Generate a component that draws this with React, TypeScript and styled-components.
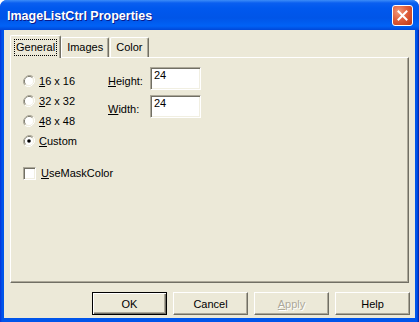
import styled, { createGlobalStyle } from 'styled-components';

const GlobalStyle = createGlobalStyle`
  html, body { margin: 0; padding: 0; background: #ffffff; }
  body { font-family: 'Liberation Sans', Arial, sans-serif; font-size: 11px; color: #000; }
`;

const Window = styled.div`
  width: 419px;
  height: 322px;
  box-sizing: border-box;
  display: flex;
  flex-direction: column;
  border-radius: 7px 7px 0 0;
  background: linear-gradient(90deg, #0831d9 0, #0055ea 2px, #0055ea 417px, #001ea0 100%);
  overflow: hidden;
`;

const TitleBar = styled.div`
  height: 30px;
  flex: none;
  display: flex;
  align-items: center;
  justify-content: space-between;
  padding: 0 6px 0 7px;
  background: linear-gradient(180deg, #3c8cf8 0, #0a5ff0 3px, #0058ee 8px, #0055e8 18px, #0062f6 26px, #0048d8 30px);
`;

const Title = styled.span`
  color: #ffffff;
  font-family: 'Liberation Sans', Arial, sans-serif;
  font-weight: bold;
  font-size: 12.5px;
  text-shadow: 1px 1px 0 #0a1a8a;
  margin-top: 1px;
`;

const CloseButton = styled.div`
  width: 19px;
  height: 19px;
  border: 1px solid #ffffff;
  border-radius: 3px;
  background: radial-gradient(circle at 30% 30%, #f29a7c 0, #e05f3c 45%, #c13512 100%);
  display: flex;
  align-items: center;
  justify-content: center;
  margin-top: 1px;
`;

const Client = styled.div`
  flex: 1;
  margin: 0 4px 4px 4px;
  background: #ece9d8;
  display: flex;
  flex-direction: column;
  padding: 5px 5px 0 6px;
`;

const TabRow = styled.div`
  display: flex;
  align-items: flex-end;
  height: 22px;
  position: relative;
  z-index: 1;
`;

const Tab = styled.div<{ $active?: boolean }>`
  box-sizing: border-box;
  padding: 0 3px;
  margin: ${(p) => (p.$active ? '0 -1px -1px 0' : '0 0 0 1px')};
  height: ${(p) => (p.$active ? 23 : 20)}px;
  display: flex;
  align-items: center;
  background: #ece9d8;
  border-left: 1px solid #ffffff;
  border-top: 1px solid #ffffff;
  border-right: 1px solid #716f64;
  box-shadow: inset -1px 0 0 #aca899;
  border-radius: 2px 2px 0 0;
`;

const TabLabel = styled.span<{ $focus?: boolean }>`
  padding: 1px;
  border: 1px dotted ${(p) => (p.$focus ? '#000' : 'transparent')};
  line-height: 13px;
`;

const Panel = styled.div`
  height: 226px;
  box-sizing: border-box;
  width: 399px;
  border-left: 1px solid #ffffff;
  border-top: 1px solid #ffffff;
  border-right: 1px solid #716f64;
  border-bottom: 1px solid #716f64;
  box-shadow: inset -1px -1px 0 #aca899;
  display: flex;
  flex-direction: column;
  padding: 12px 0 0 12px;
`;

const TopSection = styled.div`
  display: flex;
  align-items: flex-start;
`;

const RadioGroup = styled.div`
  display: flex;
  flex-direction: column;
  width: 85px;
  margin-top: 1px;
`;

const OptionRow = styled.label`
  height: 20px;
  display: flex;
  align-items: center;
  gap: 4px;
`;

const Fields = styled.div`
  display: grid;
  grid-template-columns: 42px 51px;
  row-gap: 5px;
  margin-top: -3px;
`;

const FieldLabel = styled.span`
  display: flex;
  align-items: center;
  padding-top: 5px;
`;

const Edit = styled.div`
  height: 23px;
  box-sizing: border-box;
  background: #ffffff;
  border-top: 1px solid #aca899;
  border-left: 1px solid #aca899;
  border-right: 1px solid #ffffff;
  border-bottom: 1px solid #ffffff;
  box-shadow: inset 1px 1px 0 #716f64, inset -1px -1px 0 #f1efe2;
  padding: 1px 3px;
  line-height: 13px;
`;

const CheckRow = styled(OptionRow)`
  margin-top: 12px;
  gap: 5px;
`;

const Check = styled.span`
  width: 13px;
  height: 13px;
  box-sizing: border-box;
  background: #ffffff;
  border-top: 1px solid #aca899;
  border-left: 1px solid #aca899;
  border-right: 1px solid #ffffff;
  border-bottom: 1px solid #ffffff;
  box-shadow: inset 1px 1px 0 #716f64, inset -1px -1px 0 #f1efe2;
`;

const ButtonRow = styled.div`
  display: flex;
  justify-content: flex-end;
  gap: 6px;
  margin-top: 9px;
  width: 400px;
`;

const Button = styled.div<{ $default?: boolean; $disabled?: boolean }>`
  width: 75px;
  height: 23px;
  box-sizing: border-box;
  display: flex;
  align-items: center;
  justify-content: center;
  background: #ece9d8;
  color: ${(p) => (p.$disabled ? '#aca899' : '#000')};
  text-shadow: ${(p) => (p.$disabled ? '1px 1px 0 #ffffff' : 'none')};
  border: 1px solid;
  border-color: ${(p) => (p.$default ? '#000' : '#ffffff #716f64 #716f64 #ffffff')};
  box-shadow: ${(p) =>
    p.$default
      ? 'inset 1px 1px 0 #ffffff, inset -1px -1px 0 #716f64, inset -2px -2px 0 #aca899'
      : 'inset -1px -1px 0 #aca899'};
`;

function Radio({ checked }: { checked?: boolean }) {
  return (
    <svg width="12" height="12" viewBox="0 0 12 12">
      <path d="M10.2 1.8 A6 6 0 0 0 1.8 10.2" fill="none" stroke="#aca899" strokeWidth="1" />
      <path d="M9.5 2.5 A5 5 0 0 0 2.5 9.5" fill="none" stroke="#716f64" strokeWidth="1" />
      <path d="M1.8 10.2 A6 6 0 0 0 10.2 1.8" fill="none" stroke="#ffffff" strokeWidth="1" />
      <path d="M2.5 9.5 A5 5 0 0 0 9.5 2.5" fill="none" stroke="#f1efe2" strokeWidth="1" />
      <circle cx="6" cy="6" r="4" fill="#ffffff" />
      {checked && <circle cx="6" cy="6" r="1.8" fill="#000000" />}
    </svg>
  );
}

export default function App() {
  return (
    <>
      <GlobalStyle />
      <Window>
        <TitleBar>
          <Title>ImageListCtrl Properties</Title>
          <CloseButton>
            <svg width="11" height="11" viewBox="0 0 11 11">
              <path d="M1.5 1.5 L9.5 9.5 M9.5 1.5 L1.5 9.5" stroke="#ffffff" strokeWidth="2" strokeLinecap="square" />
            </svg>
          </CloseButton>
        </TitleBar>
        <Client>
          <TabRow>
            <Tab $active>
              <TabLabel $focus>General</TabLabel>
            </Tab>
            <Tab>
              <TabLabel>Images</TabLabel>
            </Tab>
            <Tab>
              <TabLabel>Color</TabLabel>
            </Tab>
          </TabRow>
          <Panel>
            <TopSection>
              <RadioGroup>
                <OptionRow><Radio /><span><u>1</u>6 x 16</span></OptionRow>
                <OptionRow><Radio /><span><u>3</u>2 x 32</span></OptionRow>
                <OptionRow><Radio /><span><u>4</u>8 x 48</span></OptionRow>
                <OptionRow><Radio checked /><span><u>C</u>ustom</span></OptionRow>
              </RadioGroup>
              <Fields>
                <FieldLabel><span><u>H</u>eight:</span></FieldLabel>
                <Edit>24</Edit>
                <FieldLabel><span><u>W</u>idth:</span></FieldLabel>
                <Edit>24</Edit>
              </Fields>
            </TopSection>
            <CheckRow><Check /><span><u>U</u>seMaskColor</span></CheckRow>
          </Panel>
          <ButtonRow>
            <Button $default>OK</Button>
            <Button>Cancel</Button>
            <Button $disabled><span><u>A</u>pply</span></Button>
            <Button>Help</Button>
          </ButtonRow>
        </Client>
      </Window>
    </>
  );
}
